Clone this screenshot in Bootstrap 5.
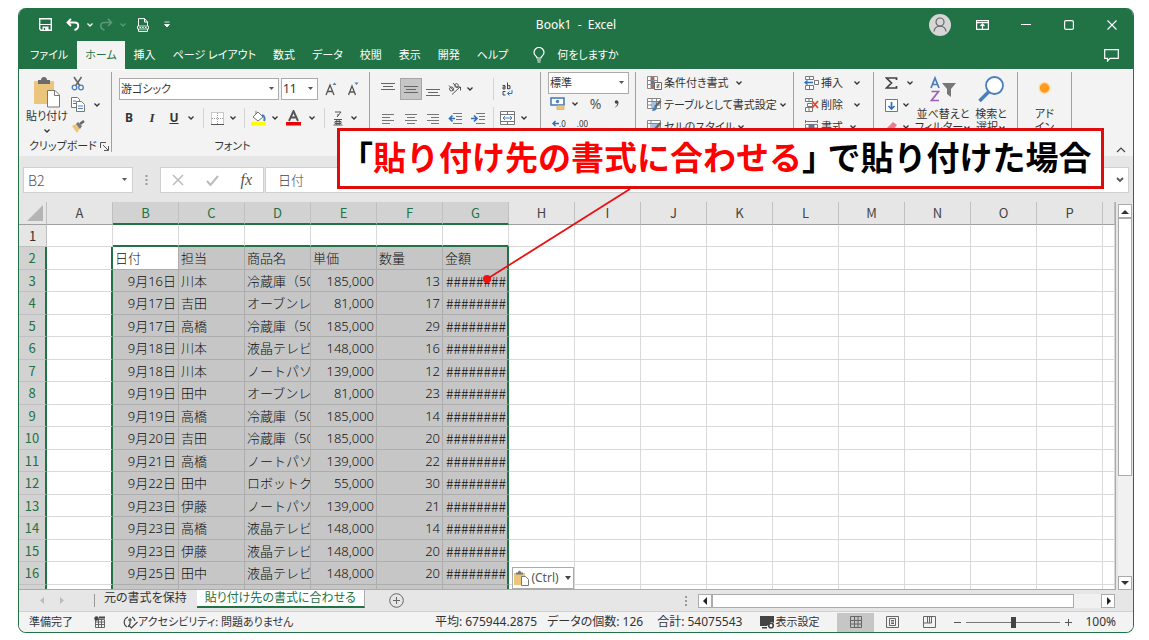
<!DOCTYPE html>
<html lang="ja">
<head>
<meta charset="utf-8">
<meta name="viewport" content="width=device-width, initial-scale=1">
<title>Book1 - Excel</title>
<link href="https://cdn.jsdelivr.net/npm/bootstrap@5.3.0/dist/css/bootstrap.min.css" rel="stylesheet">
<style>
:root{--xl:#217346;--bar:#e6e6e6;--rib:#f3f3f3;--ink:#333}
body{font:12px/16px "Noto Sans","Noto Sans CJK JP",sans-serif;font-feature-settings:"palt";color:var(--ink);padding:8px 15px 9px 18px;background:#fff}
svg{display:block;flex:none}
button,.btn,select,input{font:inherit;color:inherit}
.xl-btn{border:0;background:none;padding:0;display:inline-flex;align-items:center;justify-content:center;white-space:nowrap;line-height:16px}
.win{border:1px solid var(--xl);border-top:0;border-radius:8px;overflow:hidden;background:var(--bar)}
.titlebar{display:grid;grid-template-columns:1fr auto 1fr;height:33px;background:var(--xl);color:#fff;align-items:center}
.qat{padding-left:16px}
.qat .xl-btn{width:20px}
.qat .chv{width:13px}
.qat .dim{color:#5a9876}
.app-title{white-space:pre}
.winbtns .xl-btn{width:43px;height:30px}
.tabs{background:var(--xl);height:28px;color:#fff;font-size:11px}
.tabs .nav{gap:1px;padding-left:3px}
.tabs .nav-link{color:#fff;padding:6px 8px;line-height:16px;height:28px}
.tabs .nav-link.active{background:var(--rib);color:var(--xl)}
.ribbon{background:var(--rib);height:87px;border-top:1px solid #fff;overflow:hidden;font-size:11px}
.grp{border-right:1px solid #a0a0a0;height:80px;margin-top:2px;flex:none}
.grp-label{line-height:12px;white-space:nowrap}
.cap{line-height:13px;text-align:center}
.combo{border:1px solid #ababab;border-radius:0;background-color:#fff;height:22px;padding:0 14px 0 1px;line-height:20px;font-size:11px;background-position:right 3px center;background-size:7px 4px;background-repeat:no-repeat;color:var(--ink);background-image:url("data:image/svg+xml,%3Csvg xmlns='http://www.w3.org/2000/svg' viewBox='0 0 7 4'%3E%3Cpath d='M1 0h5L3.5 3z' fill='%23555'/%3E%3C/svg%3E");width:auto}
.combo.size-box{font-size:12px;width:37px;margin-left:2px}
.font-tools{display:grid;grid-template-columns:22px 24px 20px 14px 10px 18px 14px 9px 19px 14px 23px 14px 10px 18px 14px;height:24px;align-items:center;justify-items:center;font-size:12px}
.align-tools{display:grid;grid-template-columns:22px 23px 22px 22px 23px 9px 18px 16px;grid-template-rows:22px 22px;row-gap:7px;align-items:center;justify-items:center}
.align-tools .edge{height:16px}
.vsep{width:1px;align-self:stretch;background:#d4d4d4}
.sel-btn{background:#c6c6c6;border:1px solid #a6a6a6;width:22px;height:22px}
.cmd{height:22px;gap:2px}
.dec{font-size:8px;line-height:9px}
.fbar{padding:11px 4px 9px 4px;background:var(--bar)}
.fbox{background:#fff;border:1px solid #cfcfcf;height:26px;border-radius:0}
.fbar .combo{border-color:#cfcfcf;height:26px;width:110px;padding-left:4px;font-size:14px;font-family:"Noto Sans CJK JP",sans-serif;font-weight:300;background-position:right 4px center;color:#555}
.finput{border:0;outline:0;font:300 13px/20px "Noto Sans CJK JP",sans-serif;padding:0 12px;min-width:0;color:#444}
.sheet{font:300 13px/20px "Noto Sans","Noto Sans CJK JP",sans-serif;font-feature-settings:normal;overflow:hidden;border-right:1px solid #ababab;border-bottom:1px solid #ababab;background:#fff;min-width:0}
.gridtbl{border-collapse:separate;border-spacing:0;table-layout:fixed;width:100%}
.gridtbl td,.gridtbl th{border-right:1px solid #d9d9d9;border-bottom:1px solid #d9d9d9;padding:0 2px;white-space:nowrap;overflow:hidden;height:22px;line-height:20px;font-weight:300;color:#111}
.gridtbl tr:nth-child(even)>*{height:23px}
.gridtbl th{font-family:"Noto Sans CJK JP",sans-serif}
.gridtbl thead th{height:23px;background:var(--bar);text-align:center;border-right-color:#c0c0c0;border-bottom-color:#9f9f9f;font-weight:400;color:#444}
.gridtbl tbody th{background:var(--bar);text-align:center;border-color:#c0c0c0;font-weight:400;color:#333}
.gridtbl thead th.on{background:#d2d2d2;color:var(--xl);border-bottom:2px solid var(--xl)}
.gridtbl tbody th.on{background:#d2d2d2;color:var(--xl);border-right:2px solid var(--xl)}
.gridtbl td.in{background:#c6c6c6;border-color:#adadad}
.gridtbl td.in.cur{background:#fff}
.gridtbl td.hash{font:300 14px/20px "Noto Sans CJK JP",sans-serif;padding:0 1px}
.gridtbl td.edge-r,.gridtbl td.in.edge-r{border-right:2px solid var(--xl)}
.gridtbl td.edge-b{border-bottom:2px solid var(--xl)}
.gridtbl tr.part>*{height:4px;line-height:3px;border-bottom:0;font-size:0}
.vscroll{width:17px;padding:2px 1px 0 2px;background:var(--bar)}
.sbtn{width:14px;height:14px;background:#fff;border:1px solid #ababab;padding:0;display:flex;align-items:center;justify-content:center}
.sthumb{background:#fff;border:1px solid #ababab}
.strack{background:#f1f1f1}
.sheetbar{height:21px;background:var(--bar)}
.sheetbar .shtab{height:18px;line-height:15px;font-size:12px;color:#333;text-decoration:none;white-space:nowrap}
.sheetbar .shtab.active{background:#fff;color:var(--xl);border-bottom:2px solid var(--xl);border-right:1px solid #ababab;padding:0 8px}
.hscroll{width:417px;height:14px}
.status{height:21px;background:var(--rib);border-top:1px solid #d0d0d0;padding-left:10px;padding-right:17px;white-space:nowrap;font-size:11px}
.tally{font-size:12px}
.vw{width:37px;height:19px}
.vw.on{background:#c6c6c6}
.zoom{width:94px;height:14px;appearance:none;background:linear-gradient(#777,#777) center/100% 1px no-repeat}
.zoom::-webkit-slider-thumb{appearance:none;width:5px;height:11px;background:#444;border:0}
.pasteopt{left:494px;top:559px;width:62px;height:22px;border:1px solid #ababab;background:#fff;color:#555;padding:0 2px;gap:2px}
.callout{left:319px;top:120px;width:767px;height:61px;border:3px solid #e00b0b;background:#fff;color:#000;font:700 33px/50px "Noto Sans CJK JP",sans-serif;font-feature-settings:normal;white-space:nowrap}
.callout strong{color:#f00;font-weight:700}
.callout .brk{font-feature-settings:"halt";margin-right:9px}
.leader{left:464px;top:180px;pointer-events:none}
</style>
</head>
<body>
<svg width="0" height="0" class="position-absolute" aria-hidden="true">
 <symbol id="chev" viewBox="0 0 8 6"><path d="M1.500 1.500 4 4l2.500-2.500" fill="none" stroke="currentColor" stroke-width="1.300"/></symbol>
 <symbol id="lines" viewBox="0 0 14 9"><path d="M0 1.500h14M2 4.500h10M0 7.500h14" stroke="#666" fill="none"/></symbol>
</svg>
<div class="position-relative">
<div class="win">
 <header>
  <div class="titlebar">
   <div class="qat d-flex align-items-center">
    <button class="xl-btn" aria-label="上書き保存"><svg width="13" height="13" viewBox="0 0 13 13"><path d="M.7.7h11.600v11.600H2L.7 11z" fill="none" stroke="#fff" stroke-width="1.400"/><path d="M1 6.500h11" stroke="#fff" stroke-width="1.200"/><path d="M3.500 12V8.500h6V12z" fill="#fff"/><path d="M5.500 12v-2" stroke="#217346" stroke-width="1.300"/></svg></button>
    <button class="xl-btn ms-2" aria-label="元に戻す"><svg width="14" height="13" viewBox="0 0 14 13"><path d="M5 .8 1.500 4.500 5 8M2 4.500h6.500c5 0 5 6 0 7.500" fill="none" stroke="#fff" stroke-width="1.900"/></svg></button>
    <button class="xl-btn chv" aria-label="元に戻す一覧"><svg width="8" height="6"><use href="#chev"/></svg></button>
    <button class="xl-btn dim" aria-label="やり直し"><svg width="14" height="13" viewBox="0 0 14 13"><path d="M9 .8l3.500 3.700L9 8M12 4.500H5.500c-5 0-5 6 0 7.500" fill="none" stroke="currentColor" stroke-width="1.700"/></svg></button>
    <button class="xl-btn chv dim" aria-label="やり直し一覧"><svg width="8" height="6"><use href="#chev"/></svg></button>
    <button class="xl-btn ms-1" aria-label="PDF"><svg width="12" height="14" viewBox="0 0 12 14"><path d="M1.500 8V.6h6L10.500 4v4M7.500.6V4h3M1.500 11v2.400h9V11" fill="none" stroke="#fff"/><path d="M.5 8h11v3H.5z" fill="none" stroke="#fff" stroke-width=".8"/><path d="M2.500 9.500h1.500M5.200 9.500h1.500M8 9.500h1.500" stroke="#fff" stroke-width="1.200"/></svg></button>
    <button class="xl-btn ms-1" aria-label="クイック アクセスのカスタマイズ"><svg width="6" height="7" viewBox="0 0 6 7"><path d="M.5 1h5M.5 3.500h5L3 6z" stroke="#fff" stroke-width=".8" fill="#fff"/></svg></button>
   </div>
   <div class="app-title">Book1  -  Excel</div>
   <div class="winbtns d-flex justify-content-end align-items-center">
    <button class="xl-btn" aria-label="アカウント"><svg width="22" height="22" viewBox="0 0 22 22"><circle cx="11" cy="11" r="11" fill="#d6d6d6"/><circle cx="11" cy="8" r="4" fill="none" stroke="#666" stroke-width="1.200"/><path d="M5 17.500c.5-7 11.500-7 12 0" fill="none" stroke="#666" stroke-width="1.200"/></svg></button>
    <button class="xl-btn" aria-label="リボンの表示オプション"><svg width="13" height="10" viewBox="0 0 13 10"><path d="M.6.6h11.800v8.800H.6zM.6 2.600h11.800M6.500 9V4M4.500 6l2-2 2 2" fill="none" stroke="#fff" stroke-width="1.200"/></svg></button>
    <button class="xl-btn" aria-label="最小化"><svg width="10" height="10"><path d="M0 4.500h10" stroke="#fff"/></svg></button>
    <button class="xl-btn" aria-label="最大化"><svg width="10" height="10"><rect x=".6" y=".6" width="8.800" height="8.800" rx="1.500" fill="none" stroke="#fff" stroke-width="1.200"/></svg></button>
    <button class="xl-btn" aria-label="閉じる"><svg width="10" height="10"><path d="M.5.5l9 9M9.500.5l-9 9" stroke="#fff" stroke-width="1.200"/></svg></button>
   </div>
  </div>
  <nav class="tabs d-flex align-items-center" aria-label="リボン">
   <div class="nav flex-nowrap text-nowrap">
    <a class="nav-link" href="#">ファイル</a><a class="nav-link active" href="#">ホーム</a><a class="nav-link" href="#">挿入</a><a class="nav-link" href="#">ページ レイアウト</a><a class="nav-link" href="#">数式</a><a class="nav-link" href="#">データ</a><a class="nav-link" href="#">校閲</a><a class="nav-link" href="#">表示</a><a class="nav-link" href="#">開発</a><a class="nav-link" href="#">ヘルプ</a>
    <a class="nav-link d-flex align-items-center gap-2 ms-2" href="#"><svg width="12" height="16" viewBox="0 0 12 16"><path d="M4 11C4 9 1 8.500 1 5.500a5 5 0 0 1 10 0C11 8.500 8 9 8 11zM4 13h4M4.500 15h3" fill="none" stroke="#fff" stroke-width="1.200"/></svg><span class="ps-1">何をしますか</span></a>
   </div>
   <button class="xl-btn ms-auto" style="width:43px" aria-label="コメント"><svg width="15" height="13" viewBox="0 0 15 13"><path d="M.7.7h13.600v8.600H6L3.500 12V9.300H.7z" fill="none" stroke="#fff" stroke-width="1.200"/></svg></button>
  </nav>
 </header>

 <section class="ribbon d-flex" aria-label="ホーム">
  <!-- clipboard -->
  <div class="grp d-flex flex-column justify-content-between" style="width:93px">
   <div class="d-flex">
    <button class="xl-btn flex-column ms-1" style="width:48px">
     <svg width="28" height="32" viewBox="0 0 28 32"><rect x="1" y="5" width="20" height="23" rx="1" fill="#ecc57c"/><path d="M5 8V4h3c0-4 6-4 6 0h3v4z" fill="#6b6b6b"/><path d="M14.500 14.500h7.500l4.500 4.500v12h-12z" fill="#fff" stroke="#777"/><path d="M21.500 14.500V19.500h5" fill="none" stroke="#777"/></svg>
     <span>貼り付け</span><svg width="8" height="6" class="mt-1"><use href="#chev"/></svg></button>
    <div class="d-flex flex-column">
     <button class="xl-btn justify-content-start" style="height:22px" aria-label="切り取り"><svg width="14" height="15" viewBox="0 0 14 15"><path d="M3 1l6 9M10.500 1l-6 9" stroke="#666" stroke-width="1.600"/><circle cx="3.500" cy="11.500" r="2.300" fill="none" stroke="#4a7ebb" stroke-width="1.300"/><circle cx="10" cy="11.500" r="2.300" fill="none" stroke="#4a7ebb" stroke-width="1.300"/></svg></button>
     <button class="xl-btn gap-2" style="height:21px" aria-label="コピー"><svg width="14" height="15" viewBox="0 0 14 15"><path d="M.5.5h6l2 2v8h-8z" fill="#fff" stroke="#777"/><path d="M5.500 4.500h5l3 3v7h-8z" fill="#fff" stroke="#777"/><path d="M2 4h3M2 6.500h3M7 9h5M7 11.500h5" stroke="#4a7ebb"/></svg><svg width="8" height="6"><use href="#chev"/></svg></button>
     <button class="xl-btn justify-content-start" style="height:22px" aria-label="書式のコピー"><svg width="14" height="13" viewBox="0 0 14 13"><path d="M1 6l4-2 4 4-3 5z" fill="#ecc57c"/><path d="M5 4l2-2 4 4-2 3z" fill="#777"/><path d="M9 4l4-3" stroke="#666" stroke-width="2.500"/></svg></button>
    </div>
   </div>
   <div class="grp-label d-flex align-items-center justify-content-between" style="padding:0 2px 0 10px"><span>クリップボード</span><button class="xl-btn" aria-label="クリップボードの表示" style="height:12px"><svg width="9" height="9" viewBox="0 0 9 9"><path d="M.5 6V.5H6M3 3l5 5M8.500 4v4.500H4" fill="none" stroke="#555"/></svg></button></div>
  </div>
  <!-- font -->
  <div class="grp d-flex flex-column justify-content-between" style="width:258px;padding:6px 6px 0">
   <div>
    <div class="d-flex align-items-center" style="padding-left:1px">
     <select class="form-select combo" style="width:160px" aria-label="フォント"><option>游ゴシック</option></select>
     <select class="form-select combo size-box" aria-label="フォント サイズ"><option>11</option></select>
     <button class="xl-btn" style="width:26px" aria-label="フォント サイズの拡大"><svg width="13" height="14" viewBox="0 0 13 14"><path d="M1 13l4-10 4 10M2.500 9.500h5" fill="none" stroke="#555" stroke-width="1.300"/><path d="M7.500 3L9.500.5l2 2.500z" fill="#4a7ebb"/></svg></button>
     <button class="xl-btn" style="width:18px" aria-label="フォント サイズの縮小"><svg width="13" height="14" viewBox="0 0 13 14"><path d="M1.500 13L5 4l3.500 9M3 10h4" fill="none" stroke="#555" stroke-width="1.300"/><path d="M7.500.5L9.500 3l2-2.500z" fill="#4a7ebb"/></svg></button>
    </div>
    <div class="font-tools mt-1 pt-1">
     <button class="xl-btn fw-bold">B</button><button class="xl-btn fst-italic fw-bold" style="font-family:'Liberation Serif',serif;font-size:13px">I</button><button class="xl-btn fw-bold text-decoration-underline">U</button>
     <button class="xl-btn" aria-label="下線の種類"><svg width="8" height="6"><use href="#chev"/></svg></button><span class="vsep"></span>
     <button class="xl-btn" aria-label="罫線"><svg width="13" height="13" viewBox="0 0 13 13"><path d="M.5.5h12v12H.5zM6.500 1v11M1 6.500h11" fill="#fff" stroke="#999" stroke-dasharray="1 1"/><path d="M0 12.500h13" stroke="#555"/></svg></button>
     <button class="xl-btn" aria-label="罫線一覧"><svg width="8" height="6"><use href="#chev"/></svg></button><span class="vsep"></span>
     <button class="xl-btn" aria-label="塗りつぶしの色"><svg width="15" height="16" viewBox="0 0 15 16"><path d="M2 7l5-5 5 5-5 4z" fill="#fff" stroke="#777"/><path d="M5 4V.8" stroke="#777"/><path d="M11 5c3 1 3 4 2 6" stroke="#4a7ebb" stroke-width="2" fill="none"/><path d="M0 12h15v3.500H0z" fill="#ff0"/></svg></button>
     <button class="xl-btn" aria-label="塗りつぶし一覧"><svg width="8" height="6"><use href="#chev"/></svg></button>
     <button class="xl-btn" aria-label="フォントの色"><svg width="15" height="16" viewBox="0 0 15 16"><path d="M3 11l4.500-10L12 11M4.500 7.500h6" fill="none" stroke="#555" stroke-width="1.900"/><path d="M0 12h15v3.500H0z" fill="#e60000"/></svg></button>
     <button class="xl-btn" aria-label="フォントの色一覧"><svg width="8" height="6"><use href="#chev"/></svg></button><span class="vsep"></span>
     <button class="xl-btn flex-column" aria-label="ふりがな"><svg width="12" height="15" viewBox="0 0 12 15"><path d="M3 1h6L5 6M6 3v2M2 8.500h8M3 10.500h6v2H3zM4.800 8.500v5.500M7.200 8.500v5.500M1.500 14h9" fill="none" stroke="#555"/></svg></button>
     <button class="xl-btn" aria-label="ふりがな一覧"><svg width="8" height="6"><use href="#chev"/></svg></button>
    </div>
   </div>
   <div class="grp-label text-center pe-3">フォント</div>
  </div>
  <!-- alignment -->
  <div class="grp" style="width:171px;padding:6px 7px 0">
   <div class="align-tools">
    <button class="xl-btn edge align-self-start" aria-label="上揃え"><svg width="14" height="9"><use href="#lines"/></svg></button>
    <button class="xl-btn sel-btn" aria-label="上下中央揃え"><svg width="14" height="9"><use href="#lines"/></svg></button>
    <button class="xl-btn edge align-self-end" aria-label="下揃え"><svg width="14" height="9"><use href="#lines"/></svg></button>
    <button class="xl-btn" aria-label="方向"><svg width="15" height="14" viewBox="0 0 15 14"><circle cx="3.500" cy="7" r="2" fill="none" stroke="#555"/><path d="M1 3.500l4.500 5M5 1l4.500 5M4 12.500L12 5M9 5h3.500v3.500" fill="none" stroke="#555"/><circle cx="8.500" cy="3.500" r="1.800" fill="none" stroke="#555"/></svg></button>
    <button class="xl-btn" style="justify-self:start" aria-label="方向一覧"><svg width="8" height="6"><use href="#chev"/></svg></button>
    <span class="vsep"></span>
    <button class="xl-btn" aria-label="折り返して全体を表示する"><svg width="13" height="14" viewBox="0 0 13 14"><path d="M1.500 3.500h2.500v3.500M4 5H2v2h2M6.500.5v6.500M6.500 3.700h2.500v3H6.500M4.500 9.500H2v3.500h2.500" fill="none" stroke="#444"/><path d="M11 8v3.500H6.500M8.500 9.500l-2 2 2 2" fill="none" stroke="#2f6fba"/></svg></button><span></span>
    <button class="xl-btn" aria-label="左揃え"><svg width="12" height="11"><path d="M0 1.500h12M0 4.500h8M0 7.500h12M0 10.500h8" stroke="#777"/></svg></button>
    <button class="xl-btn" aria-label="中央揃え"><svg width="12" height="11"><path d="M0 1.500h12M2 4.500h8M0 7.500h12M2 10.500h8" stroke="#777"/></svg></button>
    <button class="xl-btn" aria-label="右揃え"><svg width="12" height="11"><path d="M0 1.500h12M4 4.500h8M0 7.500h12M4 10.500h8" stroke="#777"/></svg></button>
    <button class="xl-btn" aria-label="インデントを減らす"><svg width="14" height="11"><path d="M5 .5h9M8 3.500h6M8 6.500h6M5 10.500h9" stroke="#777"/><path d="M7 5.500H2M4.500 2.500l-3 3 3 3" fill="none" stroke="#2f6fba" stroke-width="1.700"/></svg></button>
    <button class="xl-btn" aria-label="インデントを増やす"><svg width="14" height="11"><path d="M5 .5h9M8 3.500h6M8 6.500h6M5 10.500h9" stroke="#777"/><path d="M0 5.500h5M3 2.500l3 3-3 3" fill="none" stroke="#2f6fba" stroke-width="1.700"/></svg></button>
    <span class="vsep"></span>
    <button class="xl-btn" aria-label="セルを結合して中央揃え"><svg width="15" height="14" viewBox="0 0 15 14"><path d="M.5.5h14v13H.5zM.5 3.500h14M.5 10.500h14M7.500.5v3M7.500 10.500v3" fill="#fff" stroke="#777"/><path d="M3 7h9M5 5L3 7l2 2M10 5l2 2-2 2" fill="none" stroke="#4a7ebb"/></svg></button>
    <button class="xl-btn" aria-label="結合一覧"><svg width="8" height="6"><use href="#chev"/></svg></button>
   </div>
  </div>
  <!-- number -->
  <div class="grp" style="width:95px;padding:0 7px">
   <select class="form-select combo" style="width:81px" aria-label="表示形式"><option>標準</option></select>
   <div class="d-flex align-items-center" style="height:20px">
    <button class="xl-btn" style="width:20px" aria-label="通貨"><svg width="16" height="14" viewBox="0 0 16 14"><rect x="1" y="1" width="13" height="7" fill="#fff" stroke="#4a7ebb" stroke-width="1.600"/><circle cx="7.500" cy="4.500" r="1.700" fill="#4a7ebb"/><path d="M7 8.500h7v4H7z" fill="#ecc57c" stroke="#d9a94f" stroke-width=".7"/></svg></button>
    <button class="xl-btn" style="width:14px" aria-label="通貨一覧"><svg width="8" height="6"><use href="#chev"/></svg></button>
    <button class="xl-btn" style="width:27px;font-size:14px;color:#555">%</button>
    <button class="xl-btn" style="width:15px" aria-label="桁区切り"><svg width="5" height="8" viewBox="0 0 5 8"><circle cx="2.500" cy="2" r="1.800" fill="#444"/><path d="M4 2c0 3-1 4-2.500 5" stroke="#444" fill="none"/></svg></button>
   </div>
   <div class="d-flex ps-1" style="padding-top:5px;gap:11px"><button class="xl-btn dec" aria-label="小数点以下の表示桁数を増やす"><svg width="7" height="7" viewBox="0 0 7 7"><path d="M7 3.500H1.500M3.500 1L1 3.500 3.500 6" fill="none" stroke="#2f6fba" stroke-width="1.500"/></svg>.0</button><button class="xl-btn dec" aria-label="小数点以下の表示桁数を減らす">.00</button></div>
  </div>
  <!-- styles -->
  <div class="grp d-flex flex-column align-items-start" style="width:158px;padding:0 10px 0 11px">
   <button class="xl-btn cmd"><svg width="15" height="14" viewBox="0 0 15 14"><path d="M.5.500h10v12H.5zM4 .5v12M7 .5v12M.5 4.500h10M.5 8.500h10" fill="#fff" stroke="#888"/><path d="M4 1h3v3H4zM4 9h3v3H4z" fill="#d9534f"/><path d="M4 5h3v3H4z" fill="#4a7ebb"/><path d="M7.500 6.500h7v7h-7zM9.500 9h3M9.500 11h3M12 8l-2 4" fill="#fff" stroke="#666"/></svg>条件付き書式<svg width="8" height="6" class="ms-1"><use href="#chev"/></svg></button>
   <button class="xl-btn cmd"><svg width="15" height="14" viewBox="0 0 15 14"><path d="M.5.500h13v10H.5zM.5 3.500h13M.5 7h13M5 .5v10M9.500 .5v10" fill="#fff" stroke="#888"/><path d="M5 4h4v6H5z" fill="#9dc3e6"/><path d="M13.500 3L8 9" stroke="#666" stroke-width="2.500"/><path d="M5 13c1-4 3-5 5-3 0 2-2 3-5 3z" fill="#4a7ebb"/></svg>テーブルとして書式設定<svg width="8" height="6"><use href="#chev"/></svg></button>
   <button class="xl-btn cmd"><svg width="15" height="14" viewBox="0 0 15 14"><path d="M.5.500h13v10H.5zM.5 3.500h13M4 .5v10" fill="#fff" stroke="#888"/><path d="M5 4h8v6H5z" fill="#9dc3e6"/><path d="M13.500 3L8 9" stroke="#666" stroke-width="2.500"/></svg>セルのスタイル<svg width="8" height="6"><use href="#chev"/></svg></button>
  </div>
  <!-- cells -->
  <div class="grp d-flex flex-column align-items-start" style="width:80px;padding:0 10px">
   <button class="xl-btn cmd"><svg width="15" height="14" viewBox="0 0 15 14"><path d="M1.500.5h8v3h-8zM5.500.5v3M1.500 9.500h8v4h-8zM5.500 9.500v4M10.500 4.500h4v4h-4z" fill="#fff" stroke="#777"/><path d="M9 6.500H1M3.500 4.500l-2.500 2 2.500 2" fill="none" stroke="#2f6fba" stroke-width="1.300"/></svg><span>挿入</span><svg width="8" height="6" class="ms-2"><use href="#chev"/></svg></button>
   <button class="xl-btn cmd"><svg width="15" height="14" viewBox="0 0 15 14"><path d="M1.500.5h7v3h-7zM5 .5v3M3.500 5.500h5v3h-5zM1.500 9.500h7v4h-7zM5 9.500v4" fill="#fff" stroke="#777"/><path d="M8 3l6 7M14 3L8 10" stroke="#e0452c" stroke-width="1.700"/></svg><span>削除</span><svg width="8" height="6" class="ms-2"><use href="#chev"/></svg></button>
   <button class="xl-btn cmd"><svg width="15" height="14" viewBox="0 0 15 14"><path d="M1.500 4.500h12v9h-12zM5 4.500v9M10 4.500v9M1.500 8h12" fill="#fff" stroke="#777"/><path d="M5 5h5v6H5z" fill="#4a7ebb"/><path d="M1 1.500h13M1.500 0v3M13.500 0v3" stroke="#4a7ebb"/></svg><span>書式</span><svg width="8" height="6" class="ms-1"><use href="#chev"/></svg></button>
  </div>
  <!-- editing -->
  <div class="grp d-flex" style="width:144px;padding:0 0 0 11px">
   <div class="d-flex flex-column align-items-start" style="width:30px">
    <button class="xl-btn cmd gap-2" aria-label="合計"><svg width="13" height="12" viewBox="0 0 13 12"><path d="M11.500 3V1H1.500l5 5-5 5h10V9" fill="none" stroke="#444" stroke-width="1.700"/></svg><svg width="8" height="6"><use href="#chev"/></svg></button>
    <button class="xl-btn cmd gap-1" aria-label="フィル"><svg width="13" height="13"><path d="M.5.5h12v12H.5z" fill="#fff" stroke="#777"/><path d="M6.500 3v7M3.500 7l3 3 3-3" fill="none" stroke="#2f6fba" stroke-width="1.700"/></svg><svg width="8" height="6"><use href="#chev"/></svg></button>
    <button class="xl-btn cmd gap-1" aria-label="クリア"><svg width="13" height="13" viewBox="0 0 13 13"><path d="M1 8l7-7 4 3-7 8H2z" fill="#ec7b8b"/></svg><svg width="8" height="6"><use href="#chev"/></svg></button>
   </div>
   <button class="xl-btn flex-column justify-content-start pt-1" style="width:56px"><svg width="28" height="27" viewBox="0 0 28 27"><path d="M2 12L6 2l4 10M3.500 8.500h5" fill="none" stroke="#4a7ebb" stroke-width="1.700"/><path d="M2.500 15.500h7l-7 9h7.500" fill="none" stroke="#9a5fb8" stroke-width="1.700"/><path d="M13 7h14l-5 6v8l-4-3v-5z" fill="#777"/></svg><span class="cap pt-1">並べ替えと<br>フィルター<svg class="d-inline" width="8" height="6"><use href="#chev"/></svg></span></button>
   <button class="xl-btn flex-column justify-content-start pt-1" style="width:40px"><svg width="27" height="27" viewBox="0 0 27 27"><circle cx="16.500" cy="9.500" r="8.500" fill="#fff" stroke="#4a7ebb" stroke-width="1.800"/><path d="M10.500 16L1.500 25" stroke="#4a7ebb" stroke-width="3.500"/></svg><span class="cap pt-1">検索と<br>選択<svg class="d-inline" width="8" height="6"><use href="#chev"/></svg></span></button>
  </div>
  <!-- add-ins -->
  <div class="grp d-flex justify-content-center" style="width:54px">
   <button class="xl-btn flex-column justify-content-start pt-1"><svg width="27" height="27" viewBox="0 0 27 27"><circle cx="13.500" cy="12" r="6" fill="#ffd9a3"/><circle cx="13.500" cy="12" r="4.700" fill="#ff9a1a"/></svg><span class="cap pt-1">アド<br>イン</span></button>
  </div>
  <button class="xl-btn ms-auto align-self-end" style="width:25px;height:12px" aria-label="リボンを折りたたむ"><svg width="10" height="6"><path d="M1 5l4-4 4 4" fill="none" stroke="#444" stroke-width="1.200"/></svg></button>
 </section>

 <div class="fbar d-flex align-items-center">
  <select class="form-select combo" aria-label="名前ボックス"><option>B2</option></select>
  <svg width="27" height="12"><path d="M13.500 1v2M13.500 5v2M13.500 9v2" stroke="#999" stroke-width="2"/></svg>
  <div class="fbox d-flex align-items-center justify-content-around" style="width:104px">
   <button class="xl-btn" aria-label="キャンセル"><svg width="12" height="12"><path d="M1 1l10 10M11 1L1 11" stroke="#bbb" stroke-width="1.500"/></svg></button>
   <button class="xl-btn" aria-label="入力"><svg width="13" height="11"><path d="M1 6l3.500 4L12 1" fill="none" stroke="#bbb" stroke-width="2"/></svg></button>
   <button class="xl-btn fst-italic" style="font-family:'Liberation Serif',serif;font-size:16px;color:#555" aria-label="関数の挿入">fx</button>
  </div>
  <div class="fbox d-flex align-items-center flex-grow-1" style="min-width:0;margin-left:1px">
   <input class="finput flex-grow-1" value="日付" aria-label="数式バー">
   <button class="xl-btn" style="width:16px" aria-label="数式バーの展開"><svg width="8" height="6"><path d="M1 1l3 3 3-3" fill="none" stroke="#555" stroke-width="1.800"/></svg></button>
  </div>
 </div>

 <main class="d-flex">
  <div class="sheet flex-grow-1">
   <table class="gridtbl"><colgroup id="cols"></colgroup><thead id="head"></thead><tbody id="body"></tbody></table>
  </div>
  <div class="vscroll d-flex flex-column">
   <button class="sbtn" aria-label="上へ"><svg width="8" height="5"><path d="M0 5h8L4 1z" fill="#333"/></svg></button>
   <div class="sthumb" style="flex:72 0 0;width:14px"></div><div class="strack" style="flex:28 0 0;width:14px"></div>
   <button class="sbtn" aria-label="下へ"><svg width="8" height="5"><path d="M0 0h8L4 4z" fill="#333"/></svg></button>
  </div>
 </main>

 <div class="sheetbar d-flex align-items-start">
  <button class="xl-btn align-self-center" style="width:20px;margin-left:13px" aria-label="前のシート"><svg width="4" height="7"><path d="M4 0v7L0 3.500z" fill="#bbb"/></svg></button>
  <button class="xl-btn align-self-center" style="width:20px" aria-label="次のシート"><svg width="4" height="7"><path d="M0 0v7l4-3.500z" fill="#bbb"/></svg></button>
  <span class="vsep my-1" style="margin:0 9px 0 22px;background:#999"></span>
  <a class="shtab" href="#">元の書式を保持</a>
  <a class="shtab active" style="margin-left:10px" href="#">貼り付け先の書式に合わせる</a>
  <button class="xl-btn align-self-center ms-4" aria-label="新しいシート"><svg width="15" height="15"><circle cx="7.500" cy="7.500" r="6.800" fill="none" stroke="#666"/><path d="M7.500 4v7M4 7.500h7" stroke="#666"/></svg></button>
  <svg class="ms-auto align-self-center" width="24" height="12"><path d="M12 1v2M12 5v2M12 9v2" stroke="#999" stroke-width="2"/></svg>
  <div class="hscroll d-flex align-self-center" style="margin-right:18px">
   <button class="sbtn" aria-label="左へ"><svg width="5" height="8"><path d="M4 0v8L0 4z" fill="#222"/></svg></button>
   <div class="sthumb" style="flex:93 0 0"></div><div class="strack" style="flex:7 0 0"></div>
   <button class="sbtn" aria-label="右へ"><svg width="5" height="8"><path d="M1 0v8l4-4z" fill="#222"/></svg></button>
  </div>
 </div>

 <footer class="status d-flex align-items-center">
  <span>準備完了</span>
  <button class="xl-btn" style="margin:0 17px 0 21px" aria-label="マクロの記録"><svg width="12" height="12"><path d="M1.500 3.500h9v8h-9zM1.500 6h9M1.500 8.500h9M4.500 3.500v8M7.500 3.500v8" fill="none" stroke="#666"/><circle cx="2.500" cy="2.500" r="2.200" fill="#444"/><path d="M5 1.500h6" stroke="#444" stroke-width="2"/></svg></button>
  <svg width="15" height="13" viewBox="0 0 15 13"><path d="M5 1a5.500 5.500 0 0 0-1 10M9 1a5 5 0 0 1 3 4M5 4h4M7 2v6l-2 3M5.500 9l3 3 6-6" fill="none" stroke="#444" stroke-width="1.200"/></svg>
  <span>アクセシビリティ: 問題ありません</span>
  <div class="ms-auto d-flex align-items-center">
   <span class="tally">平均: 675944.2875</span><span class="tally" style="margin-left:10px">データの個数: 126</span><span class="tally" style="margin-left:14px">合計: 54075543</span>
   <button class="xl-btn" style="margin-left:18px"><svg width="15" height="13" viewBox="0 0 15 13"><path d="M0 0h14v7l-3-1-4 4H0zM2 11h5v1.500H2z" fill="#444"/><circle cx="11" cy="9.500" r="2.300" fill="none" stroke="#444" stroke-width="1.600"/></svg>表示設定</button>
   <button class="xl-btn vw on" style="margin-left:18px" aria-label="標準"><svg width="12" height="12"><path d="M.5.5h11v11H.5zM4.500 0v12M8 0v12M0 4.500h12M0 8h12" fill="none" stroke="#666"/></svg></button>
   <button class="xl-btn vw" aria-label="ページ レイアウト"><svg width="13" height="12"><path d="M.5.5h12v11H.5zM3.500 2.500h6v7h-6zM5 4.500h3M5 6h3M5 7.500h3" fill="none" stroke="#666"/></svg></button>
   <button class="xl-btn vw" aria-label="改ページ プレビュー"><svg width="13" height="12"><path d="M.5.500h12v11H.5zM4.500 0v7h4V0M.5 7h4M6.500 0v7" fill="none" stroke="#666"/></svg></button>
   <button class="xl-btn" style="width:18px" aria-label="縮小"><svg width="7" height="7"><path d="M0 3.500h7" stroke="#555"/></svg></button>
   <input type="range" class="zoom" min="0" max="100" value="50" aria-label="ズーム">
   <button class="xl-btn" style="width:16px" aria-label="拡大"><svg width="7" height="7"><path d="M0 3.500h7M3.500 0v7" stroke="#555"/></svg></button>
   <span class="tally" style="margin-left:9px">100%</span>
  </div>
 </footer>
</div>

<button class="xl-btn pasteopt position-absolute"><svg width="15" height="16" viewBox="0 0 15 16"><path d="M0 3h11v12H0z" fill="#ecc57c"/><path d="M2 4.500V2.500h2c0-2.500 3-2.500 3 0h2v2z" fill="#777"/><path d="M7.500 6.500h4l3 3v6h-7z" fill="#fff" stroke="#777"/></svg>(Ctrl)<svg width="7" height="4" class="ms-1"><path d="M0 0h6L3 4z" fill="#444"/></svg></button>
<div class="callout position-absolute">「<strong>貼り付け先の書式に合わせる</strong><span class="brk">」</span>で貼り付けた場合</div>
<svg class="leader position-absolute" width="152" height="96" aria-hidden="true"><path d="M148 1L5 91" stroke="#e81010" stroke-width="1.800"/><circle cx="5" cy="91" r="4" fill="#f01010"/></svg>
</div>

<script>
const letters = 'ABCDEFGHIJKLMNOP'.split('');
const people = [
 ['日付','担当','商品名','単価','数量','金額'],
 ['9月16日','川本','冷蔵庫（50','185,000','13'],
 ['9月17日','吉田','オーブンレ','81,000','17'],
 ['9月17日','高橋','冷蔵庫（50','185,000','29'],
 ['9月18日','川本','液晶テレビ','148,000','16'],
 ['9月18日','川本','ノートパソ','139,000','12'],
 ['9月19日','田中','オーブンレ','81,000','23'],
 ['9月19日','高橋','冷蔵庫（50','185,000','14'],
 ['9月20日','吉田','冷蔵庫（50','185,000','20'],
 ['9月21日','高橋','ノートパソ','139,000','22'],
 ['9月22日','田中','ロボットク','55,000','30'],
 ['9月23日','伊藤','ノートパソ','139,000','21'],
 ['9月23日','高橋','液晶テレビ','148,000','14'],
 ['9月23日','伊藤','液晶テレビ','148,000','20'],
 ['9月25日','田中','液晶テレビ','148,000','20']
];
const sel = c => c >= 1 && c <= 6;
document.getElementById('cols').innerHTML = '<col style="width:28px">' + letters.map(() => '<col style="width:66px">').join('') + '<col>';
document.getElementById('head').innerHTML = '<tr><th><svg width="17" height="16" class="ms-auto"><path d="M16 0v16H0z" fill="#b4b4b4"/></svg></th>' +
 letters.map((l, c) => `<th scope="col" class="${sel(c) ? 'on' : ''}">${l}</th>`).join('') + '<th></th></tr>';
let html = '';
for (let r = 1; r <= 17; r++) {
  const data = people[r - 2] || [];
  html += `<tr class="${r === 17 ? 'part' : ''}"><th scope="row" class="${r > 1 ? 'on' : ''}">${r < 17 ? r : ''}</th>`;
  letters.forEach((l, c) => {
    let text = data[c - 1] || '';
    const k = [];
    if (c === 6 && r > 2 && r < 17) { text = '########'; k.push('hash'); }
    if (r > 1 && sel(c)) k.push('in');
    if (r === 2 && c === 1) k.push('cur');
    if (r > 1 && (c === 0 || c === 6)) k.push('edge-r');
    if (r === 1 && sel(c)) k.push('edge-b');
    if (r > 2 && [1, 4, 5, 6].includes(c)) k.push('text-end');
    html += `<td class="${k.join(' ')}">${text}</td>`;
  });
  html += '<td></td></tr>';
}
document.getElementById('body').innerHTML = html;
</script>
<script src="https://cdn.jsdelivr.net/npm/bootstrap@5.3.0/dist/js/bootstrap.bundle.min.js"></script>
</body>
</html>
